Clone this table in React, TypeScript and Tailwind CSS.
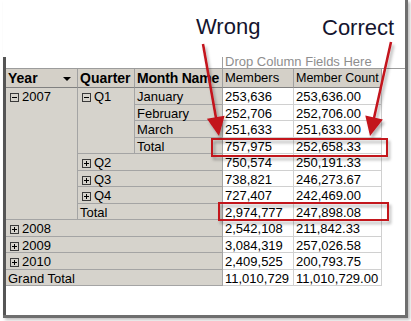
import React from "react";

const rows: [string, string][] = [
  ["253,636", "253,636.00"],
  ["252,706", "252,706.00"],
  ["251,633", "251,633.00"],
  ["757,975", "252,658.33"],
  ["750,574", "250,191.33"],
  ["738,821", "246,273.67"],
  ["727,407", "242,469.00"],
  ["2,974,777", "247,898.08"],
  ["2,542,108", "211,842.33"],
  ["3,084,319", "257,026.58"],
  ["2,409,525", "200,793.75"],
  ["11,010,729", "11,010,729.00"],
];

function Toggle({ open }: { open?: boolean }) {
  return (
    <svg width="9" height="9" viewBox="0 0 9 9" className="mt-[5px] shrink-0">
      <rect x="0.5" y="0.5" width="8" height="8" fill="none" stroke="#3a3a3a" />
      <path d="M2 4.5h5" stroke="#000" />
      {!open && <path d="M4.5 2v5" stroke="#000" />}
    </svg>
  );
}

const head = "border-r border-b border-r-[#a0a0a0] border-b-[#808080] bg-[#d4d0c8] pl-[2px] pt-[2px] leading-[14px] whitespace-nowrap overflow-hidden";
const rowHead = "border-r border-b border-[#a4a4a4] bg-[#d6d3cc] text-[13px] leading-[14px] whitespace-nowrap";
const cell = "border-r border-b border-[#d0d0d0] bg-white pl-[2px] pt-[2px] text-[13px] leading-[14px] whitespace-nowrap";

function RowHead({ label, open, className }: { label: string; open?: boolean; className: string }) {
  return (
    <div className={`${rowHead} ${className} flex items-start gap-[3px] pl-[4px]`}>
      <Toggle open={open} />
      <span className="pt-[2px]">{label}</span>
    </div>
  );
}

export default function App() {
  return (
    <div className="relative h-[321px] w-[411px] overflow-hidden bg-white font-['Liberation_Sans',Arial,sans-serif] text-black">
      <div className="ml-[3px] flex h-[318px] w-[405px] flex-col border-r-[3px] border-b-[3px] border-[#6e6e6e] shadow-[2px_2px_3px_rgba(0,0,0,0.25)]">
        <div className="flex h-[57px] shrink-0 pl-[193px] pt-[16px] text-[22px] leading-[22px] text-[#14142e]">
          <span className="w-[126px]">Wrong</span>
          <span className="mt-px">Correct</span>
        </div>

        <div className="flex-1 border-l-[3px] border-[#555]">
          <div className="flex h-[12px] border-b border-[#9c9c9c]">
            <div className="w-[216px]" />
            <div className="flex-1 overflow-hidden border-l border-[#a0a0a0] pl-[2px] text-[13px] leading-[14px] text-[#8e8e8e]">
              <div className="-mt-[2px] whitespace-nowrap">Drop Column Fields Here</div>
            </div>
          </div>

          <div className="grid w-[376px] grid-cols-[72px_57px_88px_71px_88px] grid-rows-[19px_repeat(12,16.5px)]">
            <div className={`${head} flex items-start`}>
              <span className="text-[14px] font-bold">Year</span>
              <svg width="8" height="4" viewBox="0 0 8 4" className="mt-[6px] mr-[6px] ml-auto">
                <path d="M0 0h8L4 4z" fill="#000" />
              </svg>
            </div>
            <div className={`${head} text-[14px] font-bold`}>Quarter</div>
            <div className={`${head} text-[14px] font-bold tracking-[-0.2px]`}>Month Name</div>
            <div className={`${head} text-[13px]`}>Members</div>
            <div className={`${head} text-[12.5px]`}>Member Count</div>

            {rows.map((r, i) => (
              <React.Fragment key={i}>
                {i === 0 && (
                  <>
                    <RowHead label="2007" open className="row-span-8" />
                    <RowHead label="Q1" open className="row-span-4" />
                  </>
                )}
                {i === 0 && <div className={`${rowHead} pl-[2px] pt-[2px]`}>January</div>}
                {i === 1 && <div className={`${rowHead} pl-[2px] pt-[2px]`}>February</div>}
                {i === 2 && <div className={`${rowHead} pl-[2px] pt-[2px]`}>March</div>}
                {i === 3 && <div className={`${rowHead} pl-[2px] pt-[2px]`}>Total</div>}
                {i === 4 && <RowHead label="Q2" className="col-span-2" />}
                {i === 5 && <RowHead label="Q3" className="col-span-2" />}
                {i === 6 && <RowHead label="Q4" className="col-span-2" />}
                {i === 7 && <div className={`${rowHead} col-span-2 pl-[2px] pt-[2px]`}>Total</div>}
                {i === 8 && <RowHead label="2008" className="col-span-3" />}
                {i === 9 && <RowHead label="2009" className="col-span-3" />}
                {i === 10 && <RowHead label="2010" className="col-span-3" />}
                {i === 11 && <div className={`${rowHead} col-span-3 pl-[2px] pt-[2px]`}>Grand Total</div>}
                <div className={cell}>{r[0]}</div>
                <div className={cell}>{r[1]}</div>
              </React.Fragment>
            ))}
          </div>
        </div>
      </div>

      <svg className="pointer-events-none absolute inset-0" width="411" height="321" viewBox="0 0 411 321">
        <defs>
          <filter id="sh" x="-20%" y="-20%" width="150%" height="150%">
            <feDropShadow dx="2" dy="3" stdDeviation="1.5" floodColor="#000" floodOpacity="0.3" />
          </filter>
        </defs>
        <g filter="url(#sh)" fill="none" stroke="#c3121c" strokeWidth="2">
          <rect x="212" y="139" width="175" height="17" />
          <rect x="219" y="203" width="169" height="17" />
        </g>
        <g filter="url(#sh)" fill="#c3121c" stroke="#c3121c">
          <line x1="203" y1="44" x2="216" y2="118" strokeWidth="2.5" />
          <polygon points="219,136 224.6,115.8 206.9,118.8" strokeWidth="0" />
          <line x1="391" y1="42" x2="374" y2="118" strokeWidth="2.5" />
          <polygon points="370,136 382.9,119.5 365.3,115.5" strokeWidth="0" />
        </g>
      </svg>
    </div>
  );
}
